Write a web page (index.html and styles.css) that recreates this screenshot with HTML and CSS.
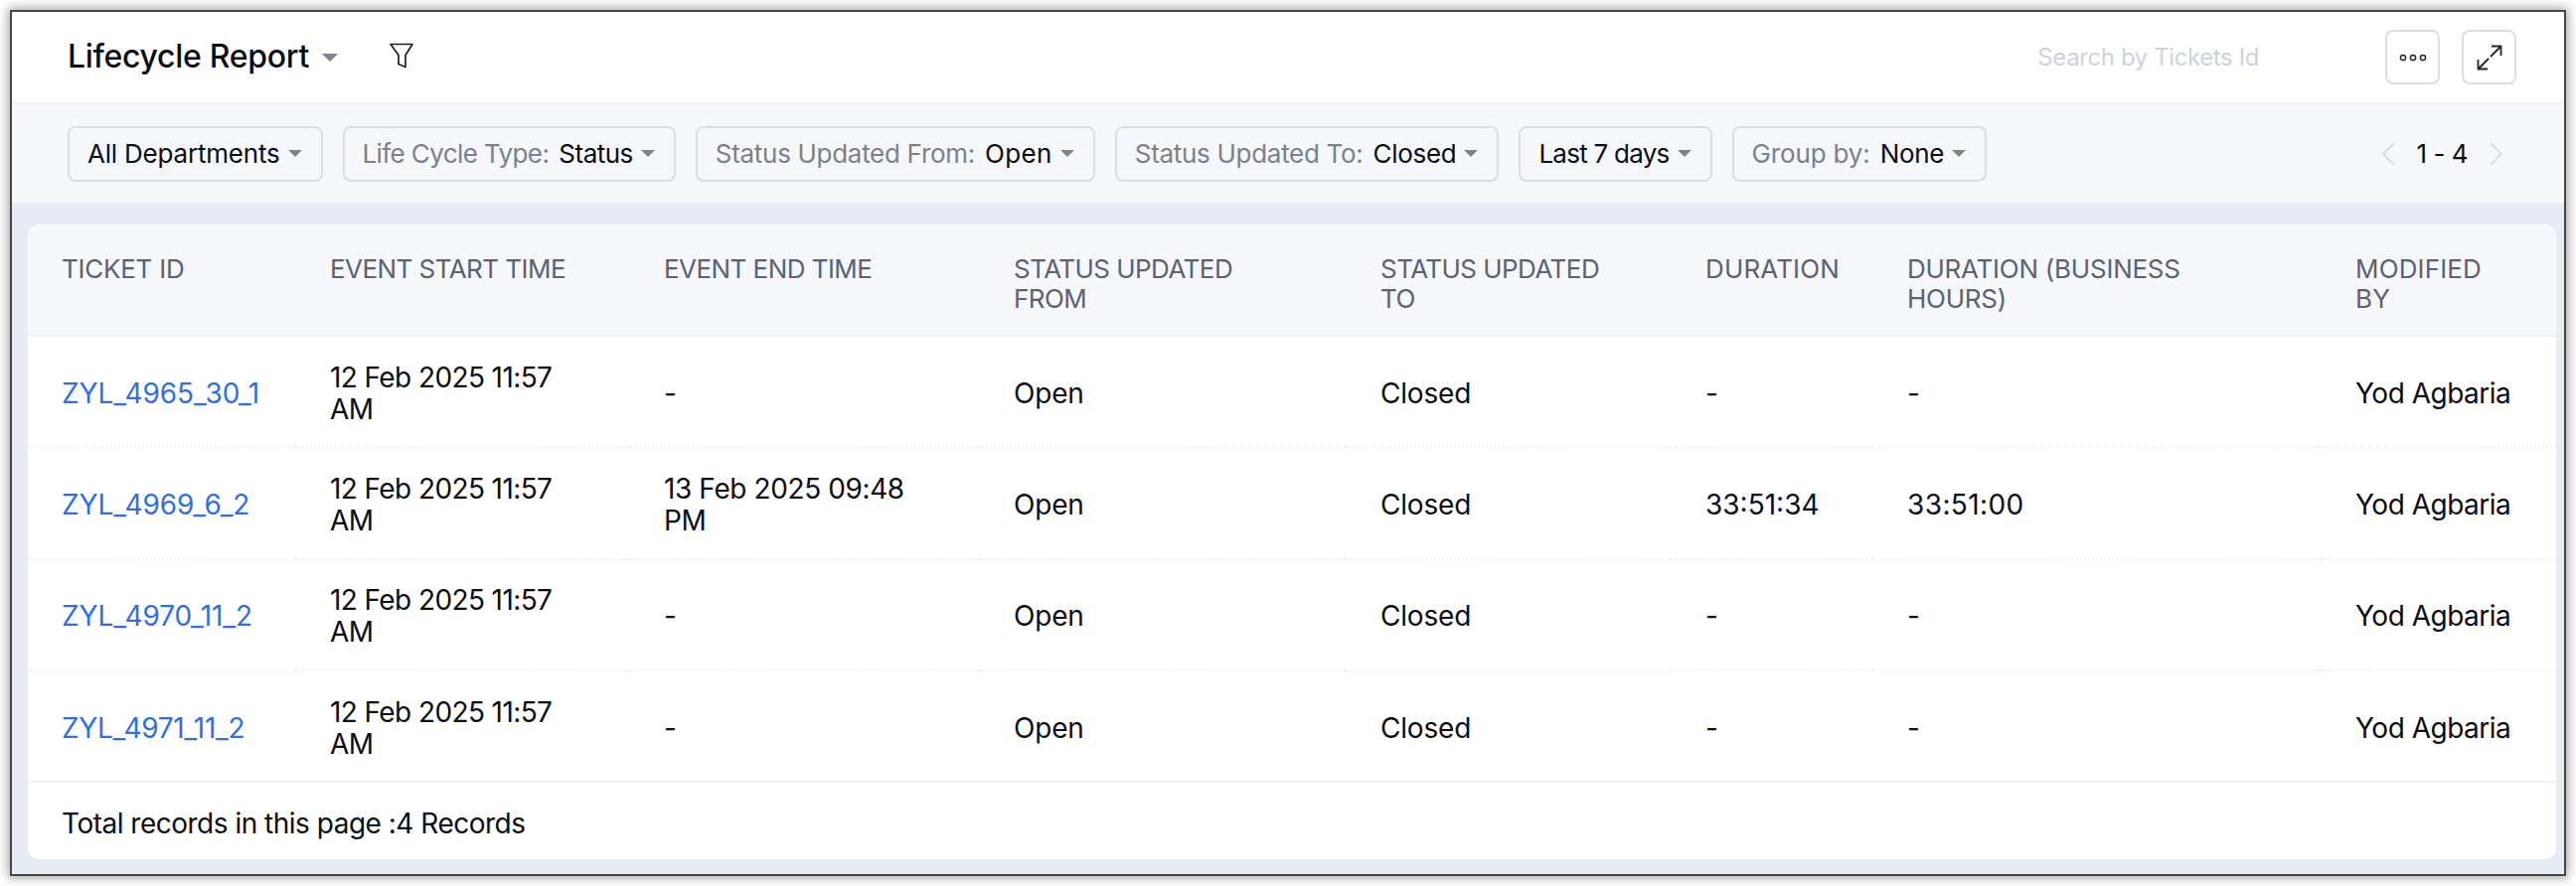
FILE: index.html
```html
<!DOCTYPE html>
<html lang="en">
<head>
<meta charset="utf-8">
<title>Lifecycle Report</title>
<link rel="stylesheet" href="styles.css">
</head>
<body>
<div class="frame">
  <header class="topbar">
    <h1 class="title">Lifecycle Report</h1>
    <span class="caret caret-lg"></span>
    <svg class="funnel" viewBox="0 0 24 26" width="24" height="26"><path d="M1 1.500H23L16 12.500V24.500L9 21.500V12.500Z" fill="none" stroke="#1c1f26" stroke-width="1.700" stroke-linejoin="round"/></svg>
    <span class="search">Search by Tickets Id</span>
    <button class="iconbtn"><svg viewBox="0 0 28 8" width="28" height="8"><g fill="none" stroke="#23262d" stroke-width="1.500"><circle cx="4" cy="4" r="2.600"/><circle cx="14" cy="4" r="2.600"/><circle cx="24" cy="4" r="2.600"/></g></svg></button>
    <button class="iconbtn"><svg viewBox="0 0 26 26" width="26" height="26"><g fill="none" stroke="#23262d" stroke-width="1.800"><path d="M14 12 24.500 1.500M15 1.500H24.500V11"/><path d="M12 14 1.500 24.500M1.500 15V24.500H11"/></g></svg></button>
  </header>
  <div class="filters">
    <div class="chip"><b class="soft">All Departments</b><span class="caret"></span></div>
    <div class="chip"><i class="tight">Life Cycle Type:</i><b class="snug">Status</b><span class="caret"></span></div>
    <div class="chip"><i>Status Updated From:</i><b class="loose">Open</b><span class="caret"></span></div>
    <div class="chip"><i>Status Updated To:</i><b>Closed</b><span class="caret"></span></div>
    <div class="chip"><b class="tight">Last 7 days</b><span class="caret"></span></div>
    <div class="chip"><i class="loose">Group by:</i><b>None</b><span class="caret"></span></div>
    <div class="pager">
      <svg viewBox="0 0 14 24" width="14" height="24"><path d="M12.500 1.500 2 12 12.500 22.500" fill="none" stroke="#cfd5e0" stroke-width="1.600"/></svg>
      <span>1 - 4</span>
      <svg viewBox="0 0 14 24" width="14" height="24"><path d="M1.500 1.500 12 12 1.500 22.500" fill="none" stroke="#cfd5e0" stroke-width="1.600"/></svg>
    </div>
  </div>
  <main class="content">
    <div class="card">
      <table class="report">
        <colgroup>
          <col class="c1"><col class="c2"><col class="c3"><col class="c4"><col class="c5"><col class="c6"><col class="c7"><col class="c8">
        </colgroup>
        <thead>
          <tr><th class="wide">Ticket Id</th><th>Event Start Time</th><th>Event End Time</th><th>Status Updated From</th><th>Status Updated To</th><th class="wider">Duration</th><th class="wide">Duration (Business Hours)</th><th class="wider">Modified By</th></tr>
        </thead>
        <tbody>
          <tr><td><a href="#">ZYL_4965_30_1</a></td><td class="date">12 Feb 2025 11:57 AM</td><td>-</td><td>Open</td><td>Closed</td><td>-</td><td>-</td><td class="who">Yod Agbaria</td></tr>
          <tr><td><a href="#">ZYL_4969_6_2</a></td><td class="date">12 Feb 2025 11:57 AM</td><td class="date2">13 Feb 2025 09:48 PM</td><td>Open</td><td>Closed</td><td class="dur">33:51:34</td><td class="dur2">33:51:00</td><td class="who">Yod Agbaria</td></tr>
          <tr><td><a href="#">ZYL_4970_11_2</a></td><td class="date">12 Feb 2025 11:57 AM</td><td>-</td><td>Open</td><td>Closed</td><td>-</td><td>-</td><td class="who">Yod Agbaria</td></tr>
          <tr><td><a href="#" class="short">ZYL_4971_11_2</a></td><td class="date">12 Feb 2025 11:57 AM</td><td>-</td><td>Open</td><td>Closed</td><td>-</td><td>-</td><td class="who">Yod Agbaria</td></tr>
        </tbody>
      </table>
      <footer class="total">Total records in this page :4 Records</footer>
    </div>
  </main>
</div>
</body>
</html>
```
FILE: styles.css
```css
* { box-sizing: border-box; }
html, body { height: 100%; }
body {
  margin: 0;
  padding: 10px;
  background: #fff;
  font-family: "Inter", "Liberation Sans", sans-serif;
  color: #0b0d12;
  overflow: hidden;
}
.frame {
  width: 2572px;
  height: 872px;
  border: 2px solid #45474b;
  box-shadow: 0 0 10px 2px rgba(0, 0, 0, .35);
  display: flex;
  flex-direction: column;
  background: #e7ecf4;
}
.topbar {
  height: 93px;
  flex: none;
  background: #fff;
  border-bottom: 2px solid #edf0f5;
  display: flex;
  align-items: center;
  padding: 0 48px 0 56px;
}
.title {
  margin: -3px 0 0;
  font-size: 32px;
  font-weight: 500;
  letter-spacing: -0.3px;
  color: #0b0d12;
}
.caret {
  display: inline-block;
  width: 0;
  height: 0;
  border-left: 7px solid transparent;
  border-right: 7px solid transparent;
  border-top: 7px solid #7d828e;
  margin-left: 8px;
}
.caret-lg { border-width: 8px 8px 0; margin-left: 13px; }
.funnel { margin-left: 52px; margin-top: -3px; }
.search {
  margin-left: auto;
  font-size: 24px;
  color: #ccd3df;
  letter-spacing: -0.4px;
  margin-right: 127px;
  margin-top: -1px;
}
.iconbtn {
  width: 55px;
  height: 55px;
  padding: 0;
  border: 2px solid #d8dee8;
  border-radius: 8px;
  background: #fff;
  display: flex;
  align-items: center;
  justify-content: center;
  margin-left: 22px;
}
.iconbtn:first-of-type { margin-left: 0; }
.filters {
  height: 99px;
  flex: none;
  background: #f5f7fb;
  display: flex;
  align-items: center;
  gap: 20px;
  padding: 0 61px 0 56px;
}
.chip {
  height: 56px;
  border: 2px solid #d8dee8;
  border-radius: 8px;
  display: flex;
  align-items: center;
  padding: 0 19px 0 18px;
  font-size: 26px;
  white-space: nowrap;
}
.chip i { font-style: normal; color: #7a808c; margin-right: 10px; letter-spacing: -0.3px; }
.chip i.tight { letter-spacing: -0.6px; }
.chip i.loose { letter-spacing: -0.15px; }
.chip b { font-weight: 400; color: #0b0d12; letter-spacing: -0.3px; }
.chip b.loose { letter-spacing: 0.4px; }
.chip b.soft { letter-spacing: -0.2px; }
.chip b.snug { letter-spacing: -0.5px; }
.chip b.tight { letter-spacing: -0.75px; }
.pager {
  margin-left: auto;
  display: flex;
  align-items: center;
  gap: 22px;
  font-size: 26px;
  letter-spacing: -0.5px;
}
.content {
  flex: 1;
  padding: 22px 8px 15px 16px;
  min-height: 0;
}
.card {
  height: 100%;
  background: #fff;
  border-radius: 12px;
  overflow: hidden;
}
.report {
  width: 100%;
  table-layout: fixed;
  border-collapse: collapse;
}
.c1 { width: 269px; }
.c2 { width: 336px; }
.c3 { width: 352px; }
.c4 { width: 369px; }
.c5 { width: 327px; }
.c6 { width: 203px; }
.c7 { width: 451px; }
.c8 { width: 237px; }
.report th {
  height: 112px;
  background: #f5f7fb;
  border-bottom: 2px solid #edf0f5;
  padding: 30px 50px 0 35px;
  text-align: left;
  vertical-align: top;
  font-size: 26px;
  font-weight: 400;
  line-height: 30px;
  letter-spacing: -0.55px;
  color: #5b6270;
  text-transform: uppercase;
}
.report th.wide { letter-spacing: -0.25px; }
.report th.wider { letter-spacing: 0.15px; }
.report td {
  height: 112.300px;
  padding: 3px 50px 0 35px;
  font-size: 28px;
  line-height: 32px;
  letter-spacing: -0.2px;
  border-bottom: 2px dotted #eef1f5;
}
.report th:first-child, .report td:first-child { padding-left: 34px; }
.report td.date { letter-spacing: -0.6px; }
.report td.date2 { letter-spacing: -0.4px; }
.report td.dur { letter-spacing: 0; }
.report td.dur2 { letter-spacing: 0.4px; }
.report td.who { letter-spacing: -0.5px; padding-right: 0; white-space: nowrap; }
.report tr:last-child td { border-bottom: 2px solid #edf0f5; }
.report a { color: #2f6fe0; text-decoration: none; letter-spacing: -0.05px; }
.report a.short { letter-spacing: -0.3px; }
.total {
  padding: 24px 34px 0;
  font-size: 28px;
  line-height: 34px;
  letter-spacing: -0.5px;
}
```
